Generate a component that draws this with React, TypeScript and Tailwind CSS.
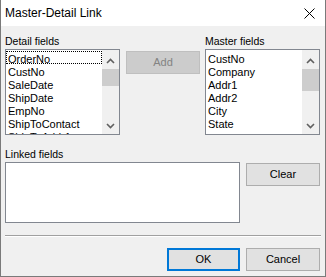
import React from "react";

const font = { fontFamily: '"Liberation Sans", Arial, sans-serif' };

function ScrollBar({ thumb }: { thumb: number }) {
  return (
    <div className="flex h-full w-[17px] flex-col bg-[#f0f0f0]">
      <div className="h-[17px] w-[17px]">
        <svg width="17" height="17" viewBox="0 0 17 17">
          <path d="M5 13 L8.5 9.5 L12 13" fill="none" stroke="#606060" strokeWidth="1.6" />
        </svg>
      </div>
      <div className="mt-[2px] w-[17px] bg-[#cdcdcd]" style={{ height: thumb }} />
      <div className="flex-1" />
      <div className="h-[17px] w-[17px]">
        <svg width="17" height="17" viewBox="0 0 17 17">
          <path d="M5 7 L8.5 10.5 L12 7" fill="none" stroke="#606060" strokeWidth="1.6" />
        </svg>
      </div>
    </div>
  );
}

function ListBox({ items, focus, thumb }: { items: string[]; focus?: boolean; thumb: number }) {
  return (
    <div className="flex h-[86px] w-[115px] border border-[#828790] bg-white">
      <div className="h-full w-[96px] overflow-hidden pt-[1px]">
        {items.map((it, i) => (
          <div
            key={it}
            className={
              "h-[13px] pl-[1px] text-[11px] leading-[14px] text-black whitespace-nowrap " +
              (focus && i === 0 ? "border border-dotted border-black" : "border border-transparent")
            }
          >
            {it}
          </div>
        ))}
      </div>
      <ScrollBar thumb={thumb} />
    </div>
  );
}

function Button({ children, disabled, def, className = "" }: { children: React.ReactNode; disabled?: boolean; def?: boolean; className?: string }) {
  const base = "flex h-[23px] items-center justify-center text-[11px] ";
  const style = disabled
    ? "bg-[#cccccc] border border-[#bfbfbf] text-[#838383]"
    : def
    ? "bg-[#e1e1e1] border-2 border-[#0078d7] text-black"
    : "bg-[#e1e1e1] border border-[#adadad] text-black";
  return <div className={base + style + " " + className}>{children}</div>;
}

export default function App() {
  return (
    <div className="h-[277px] w-[326px] border-x border-b border-[#7a7a7a] bg-[#f0f0f0]" style={font}>
      <div className="flex h-[26px] items-center justify-between bg-white pl-[4px] pr-[10px]">
        <span className="text-[12px] text-black">Master-Detail Link</span>
        <svg width="11" height="11" viewBox="0 0 11 11">
          <path d="M0.5 0.5 L10.5 10.5 M10.5 0.5 L0.5 10.5" stroke="#000" strokeWidth="1" />
        </svg>
      </div>
      <div className="pl-[4px] pt-[8px]">
        <div className="flex">
          <div className="flex w-[115px] flex-col">
            <div className="h-[15px] text-[10.5px] leading-[15px] text-black">Detail fields</div>
            <ListBox
              items={["OrderNo", "CustNo", "SaleDate", "ShipDate", "EmpNo", "ShipToContact", "ShipToAddr1"]}
              focus
              thumb={17}
            />
          </div>
          <div className="w-[85px] pl-[6px] pt-[17px]">
            <Button disabled className="w-[74px]">Add</Button>
          </div>
          <div className="flex w-[115px] flex-col">
            <div className="h-[15px] text-[10.5px] leading-[15px] text-black">Master fields</div>
            <ListBox items={["CustNo", "Company", "Addr1", "Addr2", "City", "State"]} thumb={22} />
          </div>
        </div>
        <div className="mt-[12px] h-[15px] text-[10.5px] leading-[15px] text-black">Linked fields</div>
        <div className="flex">
          <div className="h-[61px] w-[235px] border border-[#828790] bg-white" />
          <Button className="ml-[6px] mt-[1px] w-[74px]">Clear</Button>
        </div>
        <div className="mt-[12px] h-[2px] w-[316px] border-t border-b border-t-[#a0a0a0] border-b-white" />
        <div className="mt-[11px] flex w-[315px] justify-end gap-[6px]">
          <Button def className="w-[73px]">OK</Button>
          <Button className="w-[74px]">Cancel</Button>
        </div>
      </div>
    </div>
  );
}
